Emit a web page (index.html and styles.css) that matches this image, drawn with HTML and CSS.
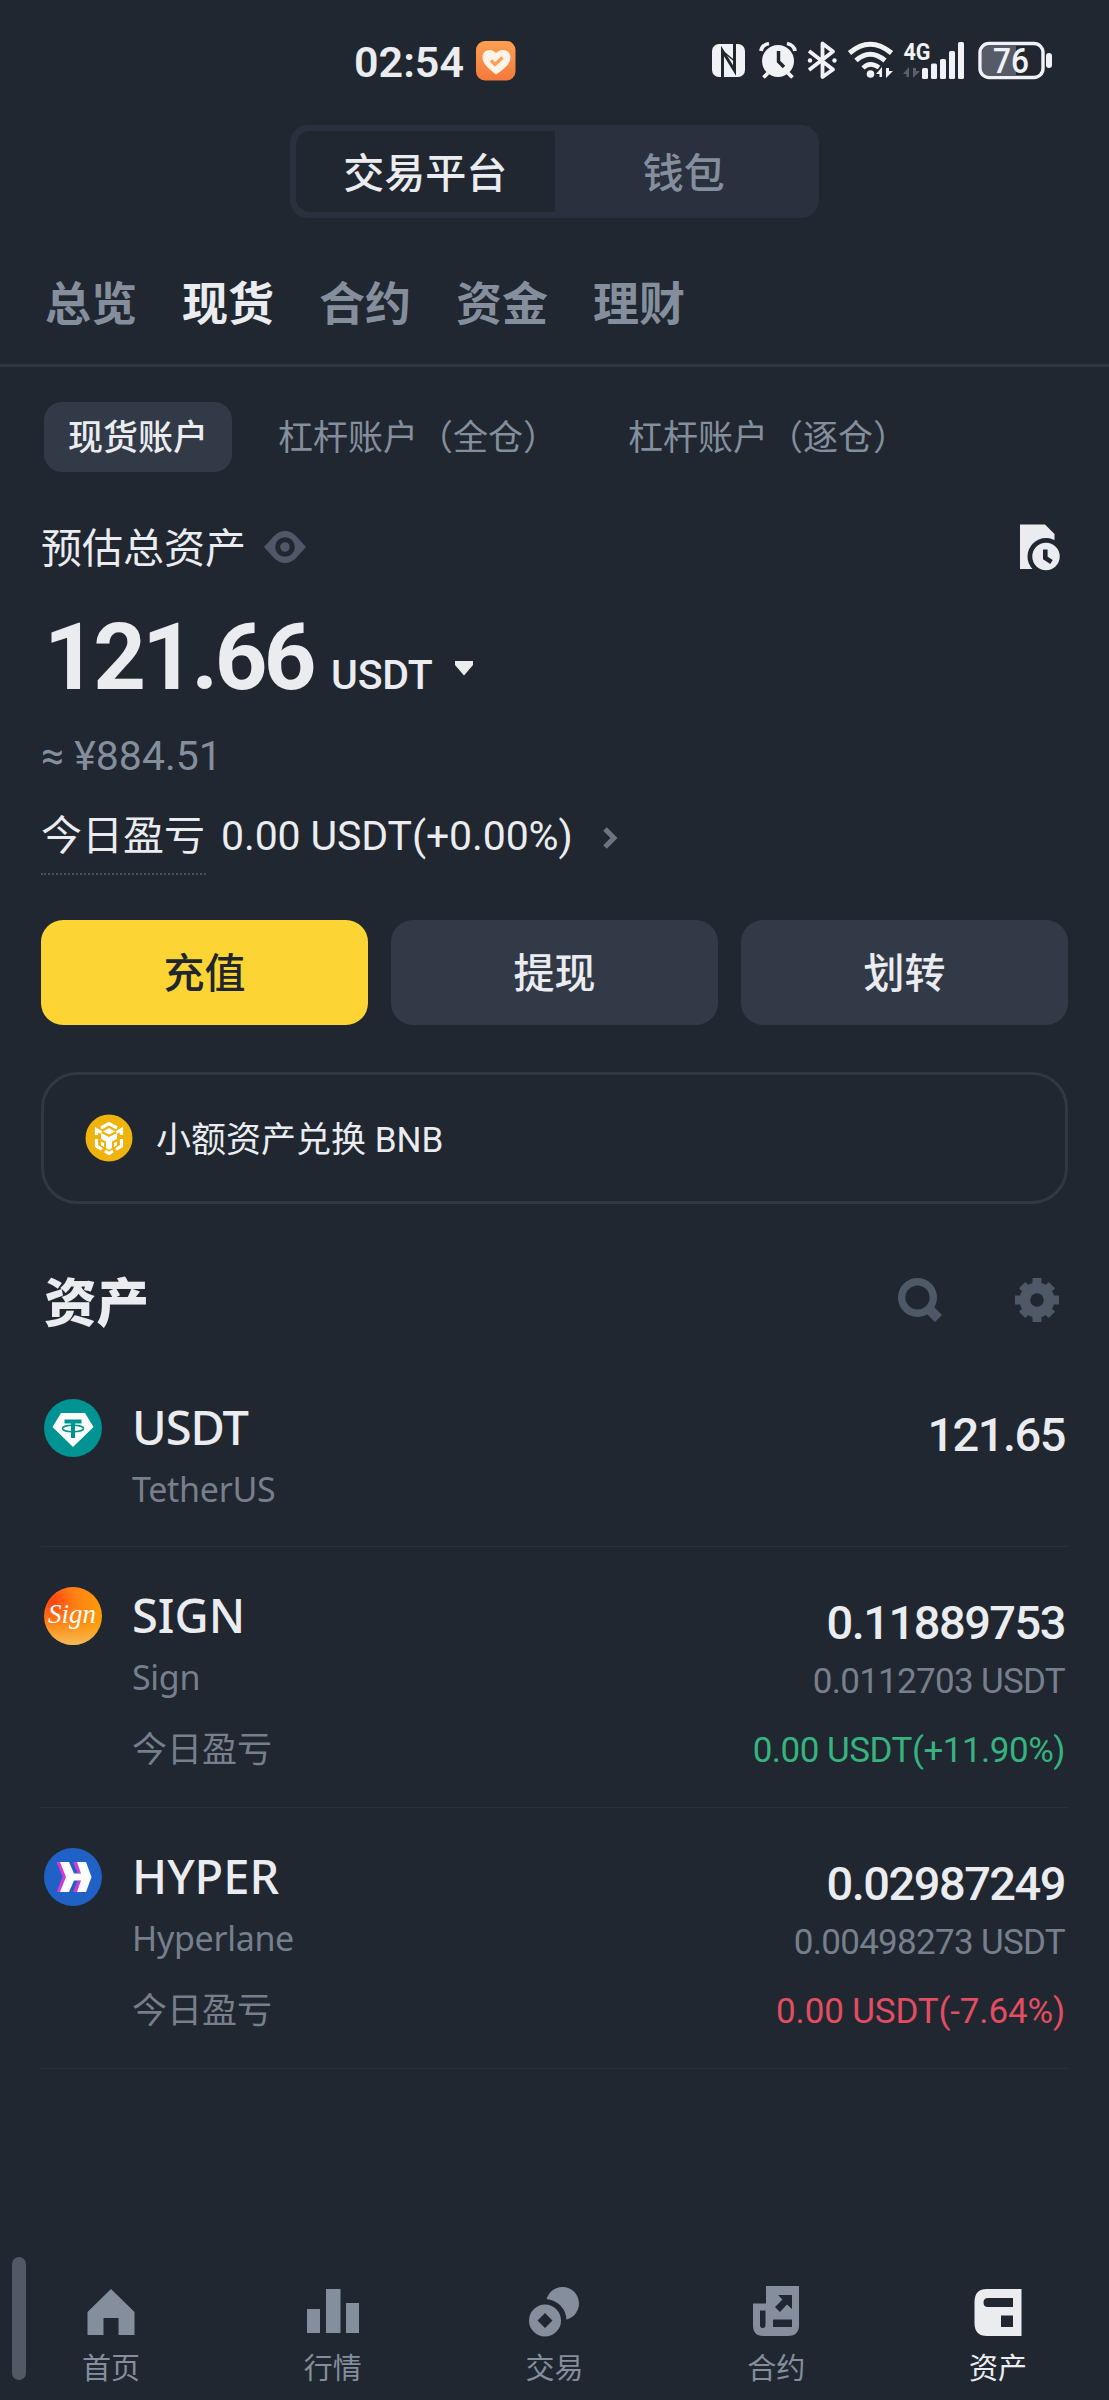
FILE: index.html
```html
<!DOCTYPE html>
<html lang="zh-CN">
<head>
<meta charset="utf-8">
<title>资产</title>
<link rel="stylesheet" href="styles.css">
</head>
<body>
<div class="screen">
  <header class="status">
    <div class="clock">02:54</div>
    <svg class="health" width="40" height="40" viewBox="0 0 40 40">
      <defs><linearGradient id="hg" x1="0" y1="0" x2="0" y2="1"><stop offset="0" stop-color="#fba052"/><stop offset="1" stop-color="#f4793c"/></linearGradient></defs>
      <rect width="39.5" height="39.5" rx="9" fill="url(#hg)"/>
      <path d="M20 33.5C14 29 6.500 23 6.500 16.500C6.500 12 9.500 9 13.500 9C16.500 9 18.500 10.500 20 12C21.500 10.500 24 9 27 9C31 9 34.500 12 34.500 16.500C34.500 23 27 29 20 33.500Z" fill="#fdf3e6"/>
      <path d="M15 19.500L19 23.500L26.500 16.500" fill="none" stroke="#f6a05c" stroke-width="3.200"/>
    </svg>
    <svg class="sysicons" width="344" height="44" viewBox="0 0 344 44">
      <g fill="#f1f2f5">
        <rect x="1" y="5" width="33" height="33" rx="7"/>
        <path d="M11.500 38V12L23.500 31.500V5" fill="none" stroke="#202730" stroke-width="3"/>
        <path d="M11.500 12L23.500 22" fill="none" stroke="#202730" stroke-width="1.500"/>
        <circle cx="67" cy="22" r="16"/>
        <path d="M50 12Q51 6 58 4.500M84 12Q83 6 76 4.500M57 34L52.500 38.500M77 34L81.500 38.500" fill="none" stroke="#f1f2f5" stroke-width="3.800"/>
        <path d="M67.500 12V22.500L73 28" fill="none" stroke="#202730" stroke-width="3.400"/>
        <path d="M98 12L122 30.500L111.500 38V4.500L122 12.500L98 31" fill="none" stroke="#f1f2f5" stroke-width="3.800" stroke-linejoin="round"/>
        <circle cx="99" cy="21.500" r="2.200"/><circle cx="123.500" cy="21.500" r="2.200"/>
        <path d="M138.500 14Q159 -3.500 180.500 14" fill="none" stroke="#f1f2f5" stroke-width="5"/>
        <path d="M145 21.500Q159 9 174 21.500" fill="none" stroke="#f1f2f5" stroke-width="5"/>
        <path d="M152 29Q159 22 168 28.500" fill="none" stroke="#f1f2f5" stroke-width="4.500"/>
        <circle cx="159.500" cy="35" r="3.800"/>
        <path d="M171 38V28L165 35H168.500V38ZM175 29V39L182 32H178V29Z"/>
        <path d="M198 38V28L192 35H195.500V38ZM202 29V39L209 32H205V29Z" fill="#59606b"/>
        <rect x="211" y="29" width="6" height="11" rx="1.500"/>
        <rect x="220" y="24.500" width="6" height="15.500" rx="1.500"/>
        <rect x="229" y="20" width="6" height="20" rx="1.500"/>
        <rect x="238" y="12" width="6" height="28" rx="1.500"/>
        <rect x="247" y="3" width="6" height="37" rx="1.500"/>
        <path d="M277 7H305V36H277Q271 36 271 30V13Q271 7 277 7Z" fill="#555c67"/>
        <rect x="269" y="4.500" width="63" height="34" rx="9" fill="none" stroke="#f1f2f5" stroke-width="3.400"/>
        <rect x="335" y="14" width="6" height="15" rx="3"/>
      </g>
      <text class="net" x="192.500" y="21" textLength="27" lengthAdjust="spacingAndGlyphs">4G</text>
      <text class="batt" x="282" y="33.500" textLength="36" lengthAdjust="spacingAndGlyphs">76</text>
    </svg>
  </header>

  <div class="segment">
    <div class="seg seg-on">交易平台</div>
    <div class="seg">钱包</div>
  </div>

  <nav class="tabs">
    <span>总览</span><span class="on">现货</span><span>合约</span><span>资金</span><span>理财</span>
  </nav>

  <div class="pills">
    <span class="pill pill-on">现货账户</span>
    <span class="pill">杠杆账户（全仓）</span>
    <span class="pill">杠杆账户（逐仓）</span>
  </div>

  <main class="content">
    <div class="total-label">
      <span>预估总资产</span>
      <svg class="eye" width="42" height="32" viewBox="0 0 42 32">
        <path d="M0 16L10 5Q15 0 21 0Q27 0 32 5L42 16L32 27Q27 32 21 32Q15 32 10 27Z" fill="#4f5867"/>
        <circle cx="21" cy="16" r="7.300" fill="#4f5867" stroke="#202730" stroke-width="5"/>
      </svg>
      <svg class="history" width="41" height="47" viewBox="0 0 41 47">
        <path d="M0 0.500H25L34.500 10V30H20V45H0Z" fill="#eaecef"/>
        <circle cx="26" cy="32.500" r="18.500" fill="#202730"/>
        <circle cx="26" cy="32.500" r="13.700" fill="#eaecef"/>
        <path d="M25.300 25.500V34L31.500 38" fill="none" stroke="#202730" stroke-width="4.600"/>
      </svg>
    </div>

    <div class="amount">
      <span class="big">121.66</span><span class="unit">USDT</span>
      <svg width="18" height="15" viewBox="0 0 18 15"><path d="M0 0H18V4L9 14.500L0 4Z" fill="#eaecef"/></svg>
    </div>
    <div class="fiat">≈ ¥884.51</div>
    <div class="pnl">
      <span class="pnl-label">今日盈亏</span>
      <span class="pnl-value">0.00 USDT(+0.00%)</span>
      <svg width="15" height="22" viewBox="0 0 15 22"><path d="M2 2L11 11L2 20" fill="none" stroke="#6d7583" stroke-width="5"/></svg>
    </div>

    <div class="actions">
      <button class="btn primary">充值</button>
      <button class="btn">提现</button>
      <button class="btn">划转</button>
    </div>

    <div class="promo">
      <svg width="48" height="48" viewBox="0 0 48 48">
        <circle cx="24" cy="24" r="23.500" fill="#efb30d"/>
        <g fill="none" stroke="#fff" stroke-width="3.200">
          <path d="M16 14L24 9.500L32 14"/>
          <path d="M11.500 21V15.500L16.500 18.500M36.500 21V15.500L31.500 18.500"/>
          <path d="M11.500 25V32L17 35.500M36.500 25V32L31 35.500M20 37L24 39.500L28 37"/>
        </g>
        <path d="M24 14L30 17.500L24 20.500L18 17.500Z" fill="#fff"/>
        <path d="M16 19L24 23L32 19V25L27 27.500V34L24 36L21 34V27.500L16 25Z" fill="#fff"/>
        <path d="M16 27.500L19 29V33L16 31ZM32 27.500L29 29V33L32 31Z" fill="#fff"/>
      </svg>
      <span>小额资产兑换 BNB</span>
    </div>

    <div class="assets-head">
      <h2>资产</h2>
      <svg width="44" height="44" viewBox="0 0 44 44"><circle cx="19.500" cy="19.500" r="15.800" fill="none" stroke="#4f5867" stroke-width="7.400"/><path d="M29 29L40.500 40.500" stroke="#4f5867" stroke-width="10"/></svg>
      <svg width="44" height="44" viewBox="0 0 44 44">
        <g fill="#4f5867"><path d="M17.500 0h9v44h-9zM0 17.500h44v9H0z"/><path d="M17.500 1h9v42h-9zM1 17.500h42v9H1z" transform="rotate(45 22 22)"/><circle cx="22" cy="22" r="17.500"/></g>
        <circle cx="22" cy="22" r="6.800" fill="#202730"/>
      </svg>
    </div>

    <section class="row row-first">
      <svg class="coin" width="58" height="58" viewBox="0 0 58 58">
        <circle cx="29" cy="29" r="29" fill="#009393"/>
        <path d="M17 14H41L49.500 28L29 48L8.500 28Z" fill="#fff"/>
        <path d="M20.500 22.500H37.500M29 22V39" fill="none" stroke="#009393" stroke-width="4"/>
        <ellipse cx="29" cy="29.500" rx="10.500" ry="3.200" fill="none" stroke="#009393" stroke-width="1.600"/>
      </svg>
      <div class="left"><div class="name name-tight">USDT</div><div class="full">TetherUS</div></div>
      <div class="right"><div class="value">121.65</div></div>
    </section>

    <section class="row">
      <svg class="coin" width="58" height="58" viewBox="0 0 58 58">
        <defs>
          <radialGradient id="sg" cx="0.150" cy="0.250" r="0.900"><stop offset="0" stop-color="#ff4310"/><stop offset="0.450" stop-color="#ff8214"/><stop offset="1" stop-color="#fd9c08"/></radialGradient>
          <linearGradient id="sl" x1="0" y1="0" x2="0" y2="1"><stop offset="0.600" stop-color="#f6b04a" stop-opacity="0"/><stop offset="1" stop-color="#f3bb5c"/></linearGradient>
        </defs>
        <circle cx="29" cy="29" r="29" fill="url(#sg)"/><circle cx="29" cy="29" r="29" fill="url(#sl)"/>
        <text class="sign-mark" x="4" y="35.500" textLength="48" lengthAdjust="spacingAndGlyphs">Sign</text>
      </svg>
      <div class="left"><div class="name">SIGN</div><div class="full">Sign</div><div class="today">今日盈亏</div></div>
      <div class="right"><div class="value">0.11889753</div><div class="sub">0.0112703 USDT</div><div class="chg up">0.00 USDT(+11.90%)</div></div>
    </section>

    <section class="row">
      <svg class="coin" width="58" height="58" viewBox="0 0 58 58">
        <circle cx="29" cy="29" r="29" fill="#1f61c4"/>
        <path d="M12.500 14H17L23 29L17 44H12.500L18.500 29ZM29 14H34L38 25H33.500ZM33.500 33H38L34 44H29Z" fill="#cf3bd6"/>
        <path d="M16 14H25L30 25.500H37L33 14H42L47.500 29L42 44H33L37 32.500H30L25 44H16L22 29Z" fill="#fff"/>
      </svg>
      <div class="left"><div class="name">HYPER</div><div class="full">Hyperlane</div><div class="today">今日盈亏</div></div>
      <div class="right"><div class="value">0.02987249</div><div class="sub">0.00498273 USDT</div><div class="chg down">0.00 USDT(-7.64%)</div></div>
    </section>
  </main>

  <footer class="nav">
    <div class="item">
      <svg width="52" height="52" viewBox="0 0 52 52"><path d="M26 3L49.500 26V49H33.500V32H18.500V49H2.500V26Z"/></svg>
      <span>首页</span>
    </div>
    <div class="item">
      <svg width="52" height="52" viewBox="0 0 52 52"><path d="M0 23H13V47H0ZM19 3H33.500V47H19ZM39 17H52V47H39Z"/></svg>
      <span>行情</span>
    </div>
    <div class="item">
      <svg width="52" height="52" viewBox="0 0 52 52"><circle cx="34.500" cy="17.500" r="16.500"/><circle cx="17" cy="34.500" r="21.500" fill="#202730"/><path fill-rule="evenodd" d="M17 18.500A16 16 0 1 1 17 50.500A16 16 0 1 1 17 18.500ZM17 27L9.500 34.500L17 42L24.500 34.500Z"/></svg>
      <span>交易</span>
    </div>
    <div class="item">
      <svg width="52" height="52" viewBox="0 0 52 52"><path fill-rule="evenodd" d="M16 0H49V39Q49 50 38 50H13Q3 50 3 39V17.500H16ZM10 24.500V39Q10 42 12.500 42Q15.500 42 15.500 39V24.500ZM23 33.500V41H42V33.500ZM28 9L32.500 13.500L25 21L30 26L37 18.500L42 23V9Z"/></svg>
      <span>合约</span>
    </div>
    <div class="item active">
      <svg width="52" height="52" viewBox="0 0 52 52"><path fill-rule="evenodd" d="M15 3H49.500V50H15Q2.500 50 2.500 37V16Q2.500 3 15 3ZM16 12Q11.500 12 11.500 16.500Q11.500 21 16 21H41V12ZM29 29.500V41H41V29.500Z"/></svg>
      <span>资产</span>
    </div>
  </footer>
  <div class="handle"></div>
</div>
</body>
</html>
```
FILE: styles.css
```css
* { box-sizing: border-box; }
body {
  margin: 0;
  background: #202730;
  color: #eaecef;
  font-family: Roboto, "Noto Sans CJK SC", sans-serif;
}
svg { display: block; flex: none; }
.screen {
  position: relative;
  width: 1109px;
  height: 2400px;
  display: flex;
  flex-direction: column;
  overflow: hidden;
}

/* status bar */
.status { height: 122px; padding-left: 354px; display: flex; align-items: center; }
.clock { width: 122px; padding-top: 2px; font-size: 43px; font-weight: 600; white-space: nowrap; letter-spacing: 0; }
.health { margin-right: 195px; }
.net { font-size: 23px; font-weight: 700; fill: #f1f2f5; }
.batt { font-size: 35px; font-weight: 500; fill: #f1f2f5; }

/* platform switch */
.segment {
  width: 529px;
  height: 93px;
  margin: 3px auto 0;
  padding: 6px;
  display: flex;
  background: #2a303d;
  border-radius: 18px;
}
.seg { flex: 1; line-height: 86px; text-align: center; font-size: 41px; font-weight: 500; color: #848e9c; }
.seg-on { height: 81px; background: #202730; color: #eaecef; border-radius: 14px 0 0 14px; }

.tabs {
  height: 149px;
  padding: 18px 0 0 45px;
  display: flex;
  align-items: center;
  gap: 45px;
  border-bottom: 3px solid #2f3641;
  font-size: 46px;
  font-weight: 600;
  color: #848e9c;
}
.tabs .on { color: #eaecef; font-weight: 700; }

.pills { display: flex; gap: 22px; margin: 35px 0 0 44px; }
.pill { height: 70px; line-height: 74px; padding: 0 24px; font-size: 35px; color: #848e9c; white-space: nowrap; border-radius: 18px; }
.pill-on { background: #333a47; color: #eaecef; font-weight: 500; }

.content { padding: 0 41px; }

/* balance summary */
.total-label { height: 60px; margin-top: 47px; line-height: 64px; display: flex; align-items: center; font-size: 41px; }
.eye { margin: -4px 0 0 18px; }
.history { margin: -3px 7px 0 auto; }
.amount { display: flex; align-items: baseline; height: 90px; margin-top: 34px; line-height: 90px; }
.big { width: 290px; padding-left: 3px; font-size: 92px; font-weight: 700; letter-spacing: -3.6px; }
.unit { width: 124px; font-size: 41px; font-weight: 500; letter-spacing: -0.2px; }
.amount svg { align-self: flex-end; margin-bottom: 27px; }
.fiat { height: 50px; margin-top: 28px; line-height: 50px; font-size: 41px; color: #848e9c; }
.pnl { height: 64px; margin-top: 30px; display: flex; font-size: 41px; line-height: 50px; }
.pnl-label { width: 165px; border-bottom: 2px dotted #4a515d; }
.pnl-value { width: 397px; padding-left: 15px; letter-spacing: -0.1px; white-space: nowrap; }
.pnl svg { margin-top: 16px; }

.actions { display: grid; grid-template-columns: repeat(3, 1fr); gap: 23px; margin-top: 45px; }
.btn {
  height: 105px;
  padding: 0 0 5px;
  border: 0;
  border-radius: 22px;
  background: #333a47;
  color: #eaecef;
  font-family: inherit;
  font-size: 41px;
  font-weight: 500;
}
.primary { background: #fcd535; color: #202630; }

.promo {
  height: 132px;
  margin-top: 47px;
  padding-left: 41px;
  display: flex;
  align-items: center;
  gap: 23px;
  border: 3px solid #313843;
  border-radius: 36px;
  font-size: 35px;
}
.promo span { padding-bottom: 3px; }

/* asset list */
.assets-head { height: 60px; margin-top: 66px; padding: 0 9px 0 3px; display: flex; align-items: center; }
.assets-head h2 { margin: 0 auto 0 0; padding-top: 8px; font-size: 52.5px; font-weight: 800; line-height: 64px; }
.assets-head svg + svg { margin-left: 73px; }

.row { height: 261px; padding: 40px 3px 0 3px; display: flex; border-bottom: 1px solid #29303a; }
.row-first { height: 217px; padding-top: 69px; }
.left { margin-left: 30px; }
.name { height: 58px; line-height: 57px; font-family: "Noto Sans", sans-serif; font-size: 47px; font-weight: 500; }
.name-tight { letter-spacing: -1px; }
.full { height: 46px; margin-top: 10px; line-height: 44px; font-family: "Noto Sans", sans-serif; font-size: 34px; letter-spacing: -0.3px; color: #777f8d; }
.today { height: 46px; margin-top: 25px; line-height: 49px; font-size: 35px; color: #777f8d; }
.right { margin-left: auto; text-align: right; white-space: nowrap; }
.value { height: 58px; margin-top: 6px; line-height: 60px; font-size: 47px; font-weight: 500; letter-spacing: -1.5px; }
.sub { height: 46px; margin-top: 7px; line-height: 48px; font-size: 35px; color: #777f8d; letter-spacing: -0.7px; }
.chg { height: 46px; margin-top: 23px; line-height: 48px; font-size: 35px; letter-spacing: -0.5px; }
.up { color: #36b37e; }
.down { color: #e24d61; letter-spacing: -0.15px; }
.sign-mark { font-family: "Liberation Serif", serif; font-style: italic; font-weight: 400; font-size: 27px; fill: #fff; }

/* bottom bar */
.nav { height: 114px; margin-top: auto; display: grid; grid-template-columns: repeat(5, 1fr); font-size: 29px; color: #848e9c; }
.item { display: flex; flex-direction: column; align-items: center; line-height: 42px; }
.item svg { fill: #848e9c; margin-bottom: 10px; }
.active { color: #eaecef; }
.active svg { fill: #eaecef; }
.handle { position: absolute; left: 12px; top: 2257px; width: 14px; height: 123px; border-radius: 7px; background: #525866; }
```
